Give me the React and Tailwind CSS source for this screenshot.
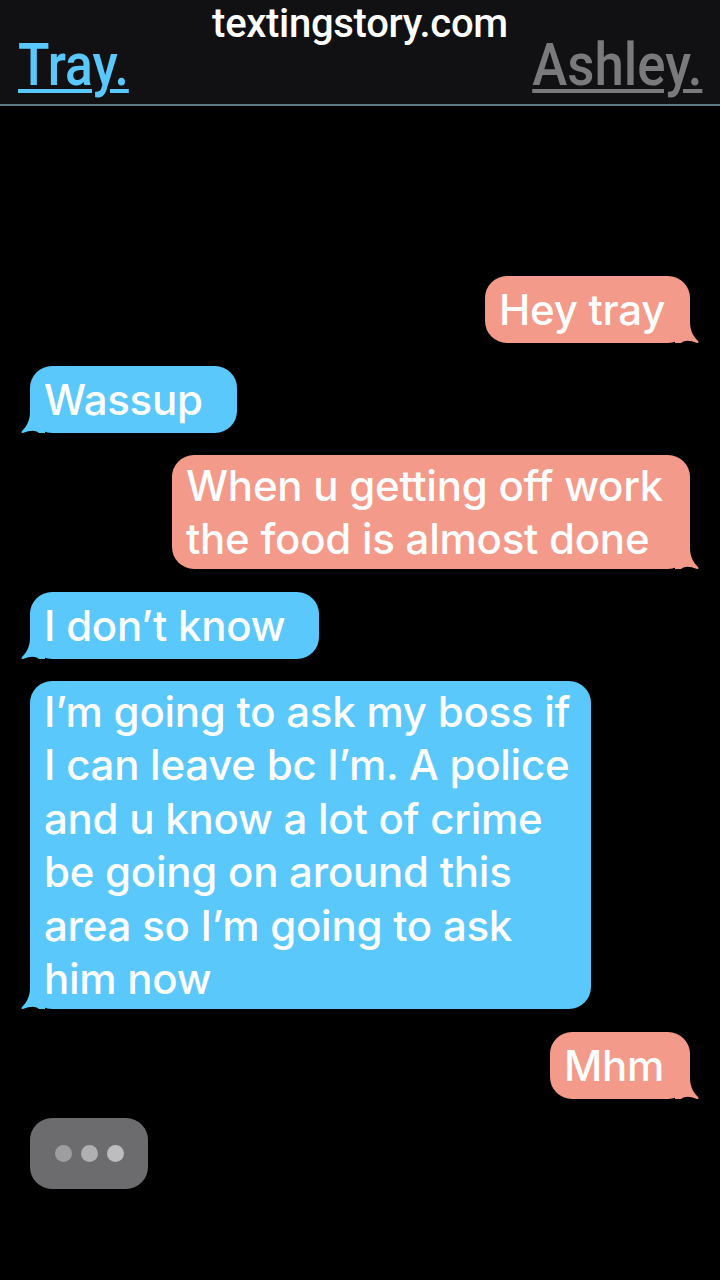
import React from 'react';

const messages = [
  { id: 1, from: 'me', lines: ['Hey tray'], w: 'w-[205px]', mt: 'mt-0' },
  { id: 2, from: 'them', lines: ['Wassup'], w: 'w-[207px]', mt: 'mt-[23px]' },
  { id: 3, from: 'me', lines: ['When u getting off work', 'the food is almost done'], w: 'w-[518px]', mt: 'mt-[22px]' },
  { id: 4, from: 'them', lines: ['I don’t know'], w: 'w-[289px]', mt: 'mt-[23px]' },
  {
    id: 5,
    from: 'them',
    lines: [
      'I’m going to ask my boss if',
      'I can leave bc I’m. A police',
      'and u know a lot of crime',
      'be going on around this',
      'area so I’m going to ask',
      'him now',
    ],
    w: 'w-[561px]',
    mt: 'mt-[22px]',
  },
  { id: 6, from: 'me', lines: ['Mhm'], w: 'w-[140px]', mt: 'mt-[23px]' },
];

const Tail = ({ side }) => {
  if (side === 'left') {
    return (
      <svg className="absolute -left-[9px] bottom-0" width="24" height="22" viewBox="0 0 24 22">
        <path d="M24 0 L24 22 L18 22 C14 19 10 19 2 22 C0 22 0 21 1 20 C7 14 9 8 9 0 Z" fill="#5ac8fa" />
      </svg>
    );
  }
  return (
    <svg className="absolute -right-[9px] bottom-0" width="24" height="22" viewBox="0 0 24 22">
      <path d="M0 0 L0 22 L6 22 C10 19 14 19 22 22 C24 22 24 21 23 20 C17 14 15 8 15 0 Z" fill="#f49a8a" />
    </svg>
  );
};

const Bubble = ({ msg }) => {
  const mine = msg.from === 'me';
  return (
    <div className={`flex ${mine ? 'justify-end pr-[30px]' : 'justify-start pl-[30px]'} ${msg.mt}`}>
      <div
        className={`relative ${msg.w} min-h-[67px] flex flex-col justify-center rounded-[22px] pl-[14px] py-[3.5px] text-white text-[42px] font-medium leading-[53.5px] tracking-[-0.25px] whitespace-nowrap ${
          mine ? 'bg-[#f49a8a]' : 'bg-[#5ac8fa]'
        }`}
      >
        {msg.lines.map((l, i) => (
          <div key={i}>{l}</div>
        ))}
        <Tail side={mine ? 'right' : 'left'} />
      </div>
    </div>
  );
};

export default function App() {
  return (
    <div className="w-[720px] h-[1280px] bg-black overflow-hidden" style={{ fontFamily: 'Inter, "Liberation Sans", Arial, sans-serif' }}>
      {/* Header */}
      <div className="h-[106px] bg-[#111114] border-b-2 border-[#5d7b82] relative pt-[2px]" style={{ fontFamily: 'Roboto, "Liberation Sans", sans-serif' }}>
        <div className="text-center text-white text-[40px] font-medium leading-[44px] tracking-[-0.3px]">
          textingstory.com
        </div>
        <div className="flex justify-between items-end px-[18px] mt-[-11px]">
          <span className="inline-block origin-left scale-x-[0.86] text-[#5ac8fa] text-[60px] font-medium leading-[60px] underline underline-offset-[4px] decoration-[4px]">
            Tray.
          </span>
          <span className="inline-block origin-right scale-x-[0.88] text-[#7a7a7c] text-[60px] font-medium leading-[60px] underline underline-offset-[4px] decoration-[4px]">
            Ashley.
          </span>
        </div>
      </div>

      {/* Conversation */}
      <div className="pt-[170px] flex flex-col">
        {messages.map((m) => (
          <Bubble key={m.id} msg={m} />
        ))}

        {/* Typing indicator */}
        <div className="pl-[30px] mt-[19px]">
          <div className="w-[118px] h-[71px] rounded-[22px] bg-[#6c6c6e] flex items-center justify-center gap-[9px]">
            <span className="w-[17px] h-[17px] rounded-full bg-[#9e9ea0]" />
            <span className="w-[17px] h-[17px] rounded-full bg-[#b0b0b2]" />
            <span className="w-[17px] h-[17px] rounded-full bg-[#bdbdbf]" />
          </div>
        </div>
      </div>
    </div>
  );
}
